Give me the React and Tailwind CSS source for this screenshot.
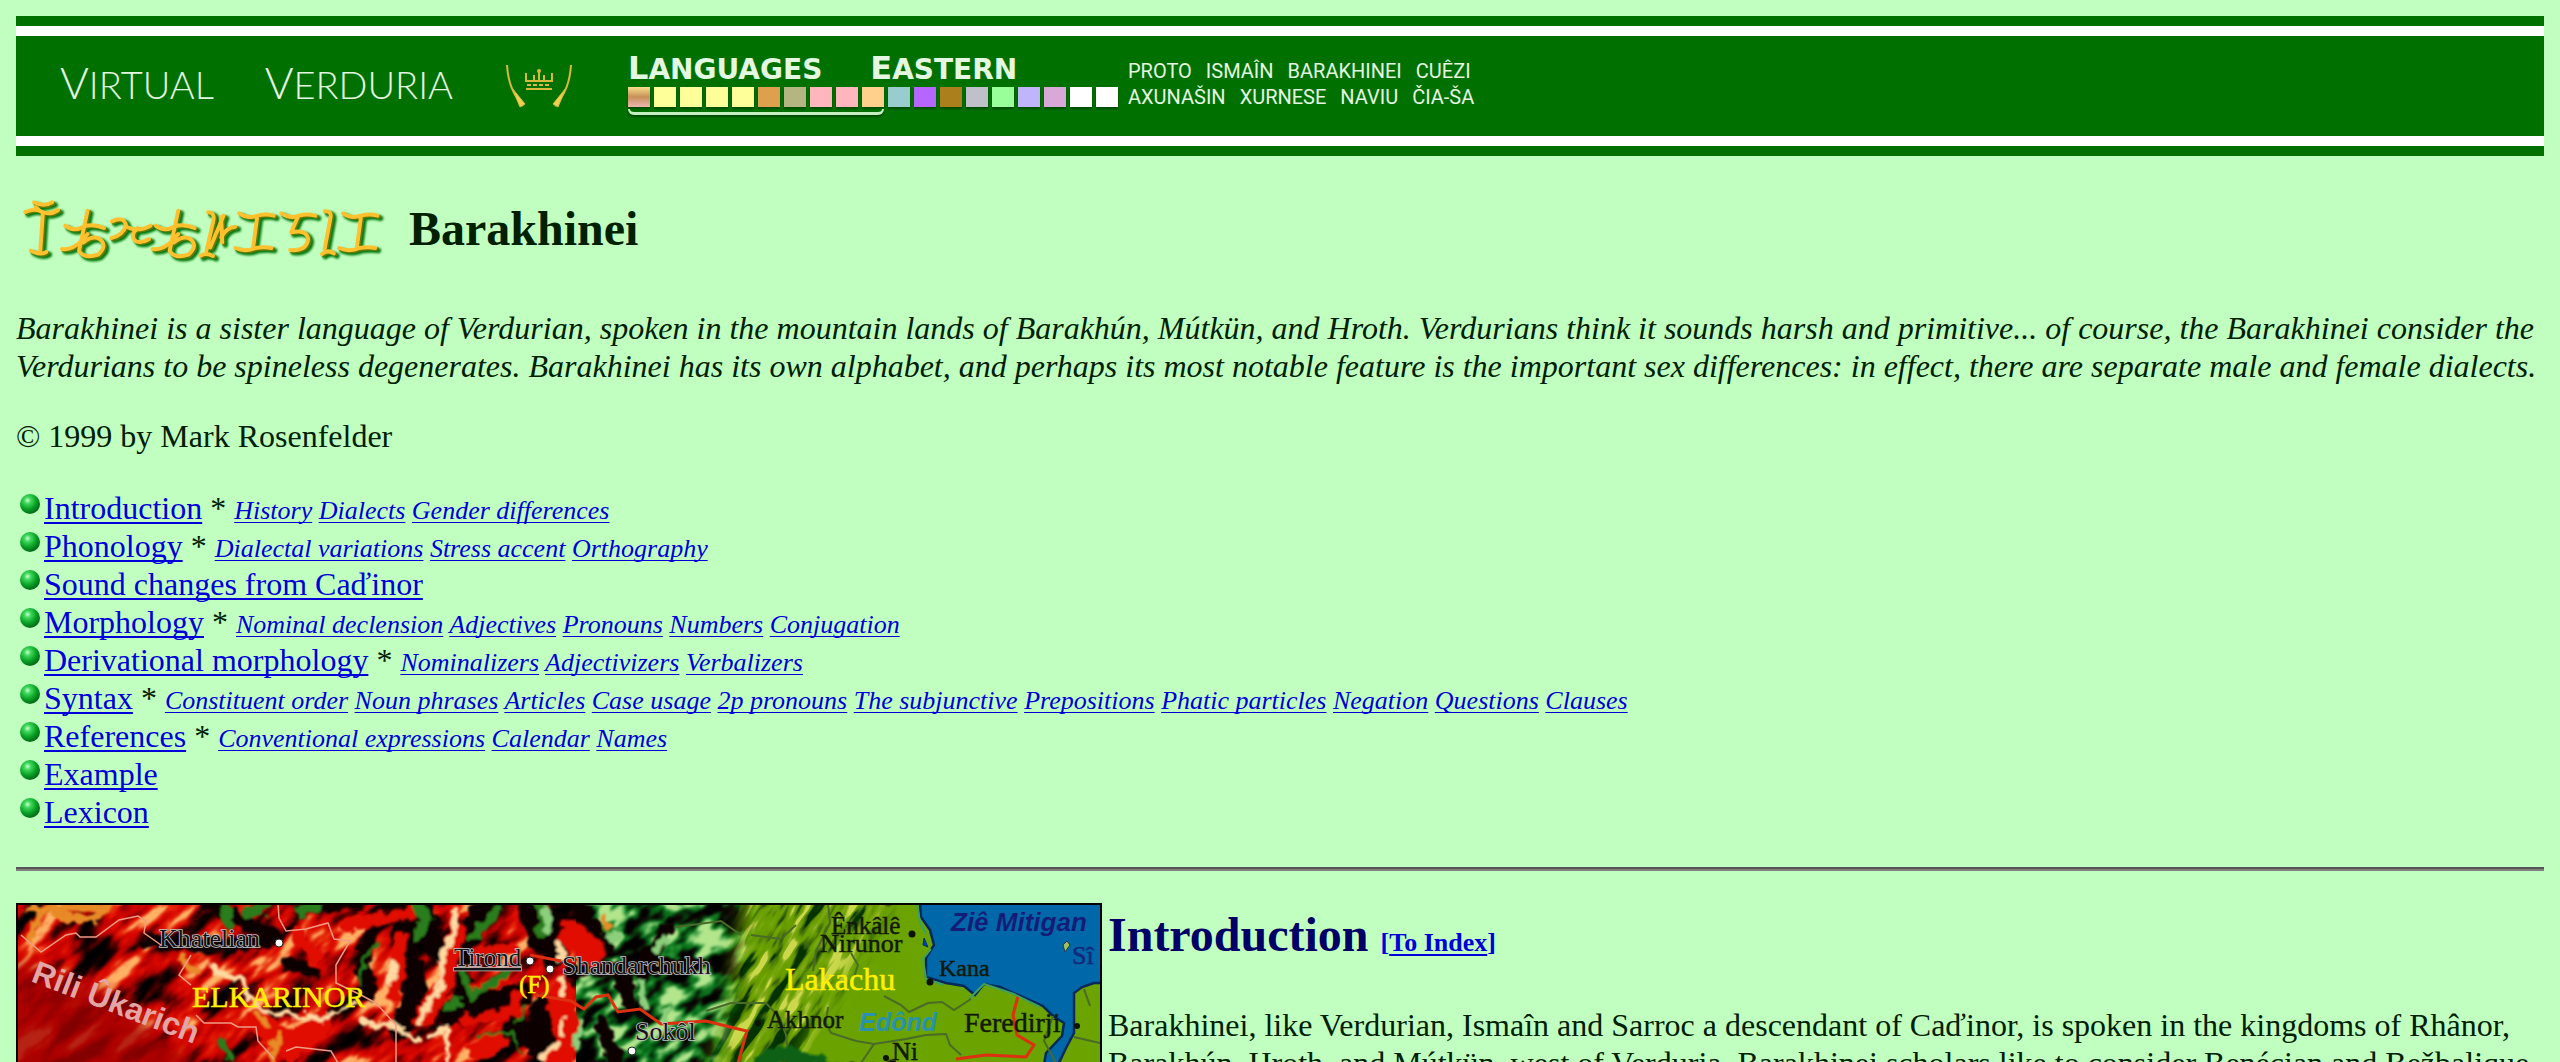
const TOPICS = [
  { title: 'Introduction', links: ['History', 'Dialects', 'Gender differences'] },
  { title: 'Phonology', links: ['Dialectal variations', 'Stress accent', 'Orthography'] },
  { title: 'Sound changes from Caďinor', links: [] },
  { title: 'Morphology', links: ['Nominal declension', 'Adjectives', 'Pronouns', 'Numbers', 'Conjugation'] },
  { title: 'Derivational morphology', links: ['Nominalizers', 'Adjectivizers', 'Verbalizers'] },
  {
    title: 'Syntax',
    links: [
      'Constituent order', 'Noun phrases', 'Articles', 'Case usage', '2p pronouns', 'The subjunctive',
      'Prepositions', 'Phatic particles', 'Negation', 'Questions', 'Clauses',
    ],
  },
  { title: 'References', links: ['Conventional expressions', 'Calendar', 'Names'] },
  { title: 'Example', links: [] },
  { title: 'Lexicon', links: [] },
];

const SWATCHES = [
  'bg-linear-to-b from-[#f6e08a] via-[#c89058] to-[#f0b8b0]',
  'bg-[#ffff99]', 'bg-[#ffff99]', 'bg-[#ffff99]', 'bg-[#ffff99]',
  'bg-[#dda04c]', 'bg-[#b5b582]', 'bg-[#ffb6bd]', 'bg-[#ffb6bd]', 'bg-[#ffd08c]',
  'bg-[#99cccc]', 'bg-[#b566ff]', 'bg-[#aa7f1c]', 'bg-[#c0c0c8]', 'bg-[#99ff99]',
  'bg-[#c0b5fa]', 'bg-[#d8a8d8]', 'bg-white', 'bg-white',
];

const LANGUAGE_ROWS = [
  ['PROTO', 'ISMAÎN', 'BARAKHINEI', 'CUÊZI'],
  ['AXUNAŠIN', 'XURNESE', 'NAVIU', 'ČIA-ŠA'],
];

function Crest() {
  return (
    <svg className="h-11 w-[68px] shrink-0" viewBox="0 0 68 44" fill="none" stroke="#d9b93c" aria-hidden="true">
      <path d="M2 1C3 17 7 29 18 42" strokeWidth="2" />
      <path d="M7 24L20 40L15 43Z" fill="#f0d050" strokeWidth="1" />
      <path d="M66 1C65 17 61 29 50 42" strokeWidth="2" />
      <path d="M61 24L48 40L53 43Z" fill="#f0d050" strokeWidth="1" />
      <path d="M21 9V17H47V9M29 11V17M39 11V17M34 8V17" strokeWidth="2" />
      <circle cx="34" cy="7" r="2" fill="#d9b93c" stroke="none" />
      <path d="M22 21H46" strokeWidth="2" strokeDasharray="4 2" />
      <path d="M21 25H47" strokeWidth="2" />
    </svg>
  );
}

function ScriptStrokes() {
  return (
    <>
      <path d="M55 45Q85 60 110 45M28 74Q60 60 80 74Q105 84 128 68M82 74L74 190M45 190Q75 205 92 194M60 60L68 66" />
      <path d="M218 70L192 190Q205 215 250 202Q280 175 255 155Q235 142 205 165M150 115Q175 135 205 118Q235 108 268 122M140 185Q170 190 200 160L218 140" />
      <path d="M292 102Q330 85 335 115Q325 145 290 152M340 120Q370 135 410 115M370 122Q345 145 365 162Q385 168 405 155" />
      <path d="M494 70L468 190Q480 215 525 202Q556 175 531 155Q511 142 481 165M426 115Q451 135 481 118Q511 108 544 122M416 185Q446 190 476 160L494 140" />
      <path d="M585 75Q608 75 600 105L580 190M562 205Q580 195 600 206M632 85L592 180M625 90L628 165M625 150Q640 120 668 118" />
      <path d="M680 78Q705 95 735 85Q760 78 785 85M735 85L722 182M668 182Q700 195 730 182Q755 178 778 182" />
      <path d="M808 78Q835 95 862 85Q885 78 912 85M860 85L838 135Q885 125 890 155Q885 192 835 188" />
      <path d="M940 72Q962 70 958 90L940 185M932 200Q950 185 968 198" />
      <path d="M996 78Q1021 95 1051 85Q1076 78 1101 85M1051 85L1038 182M984 182Q1016 195 1046 182Q1071 178 1094 182" />
    </>
  );
}

function NativeName() {
  return (
    <svg className="h-[85px] w-[381px] shrink-0" viewBox="0 0 1143 255" role="img" aria-label="Barakhinei in its own alphabet">
      <defs>
        <filter id="soft" x="-5%" y="-20%" width="110%" height="140%">
          <feGaussianBlur stdDeviation="3" />
        </filter>
      </defs>
      <g fill="none" strokeLinecap="round" strokeLinejoin="round" transform="translate(0 -2) scale(.985 1)">
        <g transform="translate(10 8)" stroke="#00780c" strokeWidth="16" filter="url(#soft)"><ScriptStrokes /></g>
        <g transform="translate(5 4)" stroke="#5d7a08" strokeWidth="12"><ScriptStrokes /></g>
        <g stroke="#ffc12e" strokeWidth="12"><ScriptStrokes /></g>
      </g>
    </svg>
  );
}

function Bullet() {
  return (
    <svg className="mt-[5px] mr-1 ml-1 h-5 w-5 shrink-0" viewBox="0 0 20 20" aria-hidden="true">
      <defs>
        <radialGradient id="bead" cx="38%" cy="32%" r="68%">
          <stop offset="0" stopColor="#c8ffd0" />
          <stop offset=".25" stopColor="#3fd85a" />
          <stop offset=".65" stopColor="#08a024" />
          <stop offset="1" stopColor="#056a18" />
        </radialGradient>
      </defs>
      <circle cx="10" cy="10" r="10" fill="url(#bead)" />
    </svg>
  );
}

const SERIF = '"Liberation Serif", serif';
const SANS = '"Liberation Sans", sans-serif';

function RegionMap() {
  return (
    <svg className="block h-[158px] w-full" viewBox="2 2 1082 158" preserveAspectRatio="xMinYMin slice" role="img" aria-label="Map of the Barakhinei kingdoms">
      <defs>
        <filter id="redRelief" x="0" y="0" width="100%" height="100%" colorInterpolationFilters="sRGB">
          <feTurbulence type="fractalNoise" baseFrequency=".016 .05" numOctaves="4" seed="7" />
          <feColorMatrix values="2.6 0 0 0 -.75  2.6 0 0 0 -.75  2.6 0 0 0 -.75  0 0 0 0 1" />
          <feComponentTransfer>
            <feFuncR type="table" tableValues="0 .1 .42 .75 .86 .9 1" />
            <feFuncG type="table" tableValues="0 0 0 .01 .03 .16 .7" />
            <feFuncB type="table" tableValues="0 0 0 0 0 .04 .4" />
          </feComponentTransfer>
          <feGaussianBlur stdDeviation=".8" />
        </filter>
        <filter id="greenRelief" x="0" y="0" width="100%" height="100%" colorInterpolationFilters="sRGB">
          <feTurbulence type="fractalNoise" baseFrequency=".03 .06" numOctaves="3" seed="12" />
          <feColorMatrix values="3.4 0 0 0 -1.15  3.4 0 0 0 -1.15  3.4 0 0 0 -1.15  0 0 0 0 1" />
          <feComponentTransfer>
            <feFuncR type="table" tableValues="0 .06 .02 .03 .1 .4 .7" />
            <feFuncG type="table" tableValues="0 .02 .22 .42 .52 .72 .9" />
            <feFuncB type="table" tableValues="0 .02 .05 .1 .15 .38 .55" />
          </feComponentTransfer>
          <feGaussianBlur stdDeviation=".8" />
        </filter>
        <filter id="foothills" x="0" y="0" width="100%" height="100%" colorInterpolationFilters="sRGB">
          <feTurbulence type="fractalNoise" baseFrequency=".02 .09" numOctaves="3" seed="4" />
          <feColorMatrix values="3 0 0 0 -1  3 0 0 0 -1  3 0 0 0 -1  0 0 0 0 1" />
          <feComponentTransfer>
            <feFuncR type="table" tableValues=".02 .25 .4 .42 .5 .8" />
            <feFuncG type="table" tableValues=".2 .42 .6 .64 .66 .85" />
            <feFuncB type="table" tableValues="0 .05 0 0 .1 .3" />
          </feComponentTransfer>
        </filter>
        <filter id="rough" x="-10%" y="-10%" width="120%" height="120%">
          <feTurbulence type="fractalNoise" baseFrequency=".09" numOctaves="2" seed="3" result="n" />
          <feDisplacementMap in="SourceGraphic" in2="n" scale="14" xChannelSelector="R" yChannelSelector="G" />
          <feGaussianBlur stdDeviation=".8" />
        </filter>
        <filter id="feather" x="-10%" y="-10%" width="120%" height="120%">
          <feGaussianBlur stdDeviation="9" />
        </filter>
        <mask id="hillsMask">
          <path d="M730 -20L880 -20L840 60L800 120L770 180L690 180L715 100Z" fill="#fff" filter="url(#feather)" />
        </mask>
        <clipPath id="west"><rect x="0" y="0" width="575" height="160" /></clipPath>
        <clipPath id="middle"><rect x="560" y="0" width="260" height="160" /></clipPath>
      </defs>

      <rect width="1084" height="160" fill="#0a0000" />
      <g clipPath="url(#west)">
        <rect x="-200" y="-500" width="1000" height="1000" transform="rotate(-42 280 80)" filter="url(#redRelief)" />
      </g>
      <g clipPath="url(#middle)">
        <rect x="350" y="-200" width="700" height="600" transform="rotate(-35 690 80)" filter="url(#greenRelief)" />
      </g>
      <path d="M-20 60Q60 60 130 120Q165 145 200 180H-20Z" fill="#a40000" opacity=".8" filter="url(#feather)" />
      <path d="M770 0H1084V160H760L735 120Q750 80 770 0Z" fill="#6ba300" filter="url(#rough)" />
      <rect x="880" width="204" height="160" fill="#6ba300" />
      <g mask="url(#hillsMask)">
        <rect x="550" y="-250" width="500" height="600" transform="rotate(-58 790 80)" filter="url(#foothills)" />
      </g>

      <g fill="none" strokeLinecap="round" filter="url(#rough)">
        <g stroke="#0c0000">
          <path d="M398 -5L385 30L400 90L385 125" strokeWidth="24" />
          <path d="M405 0L420 45M470 0L440 60L448 88M515 0L525 40M540 20L538 55" strokeWidth="22" />
          <path d="M356 30Q340 60 354 92" strokeWidth="15" />
          <path d="M435 110L505 92M528 105L525 145M500 125L535 145" strokeWidth="26" />
          <path d="M300 70L270 60M190 0L232 20L262 35M285 5L340 0M130 38L190 42L250 40" strokeWidth="13" />
          <path d="M590 45L560 0M605 70L612 100M585 120L600 160M650 25L625 70M555 68L680 62" strokeWidth="15" />
        </g>
        <g stroke="#e00d00">
          <path d="M330 22L392 12M280 30L300 55" strokeWidth="13" />
          <path d="M384 38L378 92" strokeWidth="15" />
          <path d="M440 25L430 80L405 118" strokeWidth="16" />
          <path d="M460 48L497 44M458 88L488 76M450 118L497 110L502 90" strokeWidth="9" />
          <path d="M555 30L575 50M545 90L550 135" strokeWidth="26" />
          <path d="M240 118L275 145L305 120" strokeWidth="24" />
          <path d="M460 148L480 140M535 155L550 150" strokeWidth="20" />
        </g>
        <g stroke="#ffd9a0">
          <path d="M439 8L438 28L425 60L424 85L408 108L404 122" strokeWidth="6" />
          <path d="M412 135L430 125L432 155M378 60L374 82M345 118L385 125L402 140" strokeWidth="5" />
          <path d="M196 62L200 70L225 75L232 95L250 108L305 116L340 100" strokeWidth="5" />
          <path d="M544 42V56M546 76V92M546 120V132M525 155L540 143" strokeWidth="6" />
        </g>
        <g stroke="#e88a28">
          <path d="M12 5L95 3L75 18L40 10M25 10L14 35" strokeWidth="8" />
          <path d="M180 70L165 55M240 112L250 120M588 14L592 24M255 160L262 130" strokeWidth="7" />
        </g>
        <g stroke="#2c7d1e">
          <path d="M208 5L215 25M232 10L250 4M285 8L300 4" strokeWidth="11" />
          <path d="M365 38Q340 60 345 85" strokeWidth="3" />
          <path d="M400 5L410 14L402 32M455 35L480 10M522 0L530 14L525 30" strokeWidth="11" />
          <path d="M448 70L455 95L490 70M430 104L440 100M205 140L215 155" strokeWidth="8" />
          <path d="M462 132L495 130L505 150M510 105L498 120" strokeWidth="3" />
        </g>
        <g stroke="#8ccf7c">
          <path d="M527 5L534 16L530 28M592 36L605 32M640 45L650 36M650 105V118M564 120L560 145M626 80L628 104" strokeWidth="7" />
        </g>
      </g>

      <g fill="none" stroke="#ef9a84" strokeWidth="1.5">
        <path d="M5 32L25 49L50 32L60 30L64 34L80 34L103 17L122 13L130 18L128 30L145 42" />
        <path d="M262 0L263 15L270 28L290 26L312 20L318 36L334 38L320 62L320 80L345 92L360 100L380 122L380 160" />
        <path d="M180 112L188 120L215 120L222 124L240 124L242 138L258 156M270 148L280 144L315 148L322 160M175 52L163 72L175 82" />
      </g>
      <path d="M514 52L545 58M520 92L555 98L568 106L580 94L592 92L602 109L624 106L645 121L690 118L714 124L731 128L722 160M1002 93L997 112L1001 132L1018 142L1010 154L970 152L940 156" fill="none" stroke="#dd3010" strokeWidth="3" />

      <path d="M904 0L905 14L914 27L918 42L910 55L910 74L930 80L948 83L959 92L968 81L984 84L1002 92L1027 103L1037 113L1048 120L1046 133L1030 150L1028 162L1042 162L1050 145L1058 130L1058 90L1066 84L1078 80L1086 80V0Z" fill="#0068a8" stroke="#06285a" strokeWidth="2.5" />
      <path d="M903 0L906 18L912 30M917 45L909 55L912 75L930 81M955 95L970 80L1000 90L1026 103" fill="none" stroke="#3fa060" strokeWidth="2" transform="translate(-2 1)" />
      <path d="M908 35L912 44L907 42Z" fill="#0040b0" stroke="#003070" />
      <path d="M1047 42L1051 38L1054 42L1049 49Z" fill="#a0c060" stroke="#2c3a40" />
      <g fill="none" stroke="#4a6a28" strokeWidth="2">
        <path d="M868 93L885 102L893 109L912 100L926 99L938 107L955 96" />
        <path d="M812 104L810 120L815 130L840 138L858 141L890 136L910 132L930 131L934 142L945 152" />
        <path d="M690 108L715 100L750 100L764 115L770 132L772 150M858 141L845 160M1058 134L1084 140M1068 86L1074 103M1037 113L1028 138L1040 160" />
        <path d="M812 0L814 20L800 48L797 68M835 50L842 62L838 74M735 32L765 36L780 22M660 24L705 18L725 32" />
      </g>
      <path d="M735 162L750 145L775 143L800 152L830 162Z" fill="#086018" filter="url(#rough)" />

      <g fontFamily={SERIF} fontSize="26">
        <g fill="#141414" stroke="#c4c4c4" strokeWidth="1.6" paintOrder="stroke">
          <text x="143" y="44">Khatelian</text>
          <text x="438" y="63" fontSize="25" textDecoration="underline">Tirond</text>
          <text x="546" y="71">Shandarchukh</text>
          <text x="619" y="137">Sokôl</text>
        </g>
        <g fill="#111a08" stroke="#111a08" strokeWidth=".5">
          <text x="815" y="31" fontSize="25">Ênkâlê</text>
          <text x="804" y="49">Nirunor</text>
          <text x="751" y="125" fontSize="25">Akhnor</text>
          <text x="923" y="73" fontSize="24">Kana</text>
          <text x="948" y="129" fontSize="28">Feredirji</text>
          <text x="876" y="157">Ni</text>
          <text x="1056" y="61" fill="#12287c" stroke="#12287c">Sî</text>
        </g>
        <g fill="#fff000" stroke="#fff000" strokeWidth=".5">
          <text x="176" y="104" fontSize="30">ELKARINOR</text>
          <text x="503" y="90" fontSize="25">(F)</text>
          <text x="769" y="87" fontSize="32">Lakachu</text>
        </g>
      </g>
      <g fontFamily={SANS}>
        <text x="14" y="78" fontSize="32" fontWeight="bold" fill="#e2a6a6" transform="rotate(21 14 78)">Rili Ûkarich</text>
        <g fontSize="26" fontWeight="bold" fontStyle="italic">
          <text x="935" y="28" fill="#151c78">Ziê Mitigan</text>
          <text x="843" y="128" fontSize="25" fill="#2893ae">Edônd</text>
        </g>
      </g>
      <g fill="#fff" stroke="#222">
        <circle cx="263" cy="40" r="4" /><circle cx="514" cy="58" r="4" />
        <circle cx="534" cy="66" r="4" /><circle cx="616" cy="148" r="4" />
      </g>
      <g fill="#0c1206">
        <circle cx="896" cy="31" r="3.5" /><circle cx="742" cy="120" r="3" /><circle cx="914" cy="79" r="3.5" />
        <circle cx="1061" cy="123" r="3" /><circle cx="870" cy="155" r="3" />
      </g>
    </svg>
  );
}

function Banner() {
  return (
    <header className="border-y-[10px] border-[#007100] bg-white py-[10px] font-['Lato',sans-serif] text-[#e4f7e0]">
      <div className="flex h-[100px] items-start bg-[#007100] pl-11">
        <a href="#verduria" className="mt-5 flex w-[401px] shrink-0 items-baseline justify-between pr-2 text-[38px] leading-[56px] font-light whitespace-nowrap">
          <span><span className="text-[44px] leading-none">V</span>IRTUAL</span>
          <span><span className="text-[44px] leading-none">V</span>ERDURIA</span>
        </a>
        <div className="mt-7 ml-11"><Crest /></div>
        <div className="mt-4 ml-[55px] flex shrink-0 flex-col">
          <div className="flex h-[35px] gap-12 font-['DejaVu_Sans',sans-serif] text-[28px] leading-[35px] font-bold whitespace-nowrap">
            <a href="#languages"><span className="text-[32px] leading-none">L</span>ANGUAGES</a>
            <a href="#eastern"><span className="text-[32px] leading-none">E</span>ASTERN</a>
          </div>
          <div className="flex gap-1">
            {SWATCHES.map((tone, i) => (
              <a key={i} href="#swatch" aria-label={`Language ${i + 1}`} className={`h-5 w-[22px] shadow-[0_2px_2px_#004a00] ${tone}`} />
            ))}
          </div>
          <div className="mt-0.5 h-1.5 w-64 rounded-b-lg border-b-[3px] border-x-2 border-[#c4efc0] shadow-[0_2px_2px_#004a00]" />
        </div>
        <nav className="mt-[22px] ml-2.5 flex flex-col font-['Roboto',sans-serif] text-[20px] leading-[26px]" aria-label="Languages">
          {LANGUAGE_ROWS.map((row) => (
            <div key={row[0]} className="flex gap-3.5">
              {row.map((name) => <a key={name} href="#language">{name}</a>)}
            </div>
          ))}
        </nav>
      </div>
    </header>
  );
}

const LINK = 'text-[#0000d8] underline decoration-2 underline-offset-[3px] [text-decoration-skip-ink:none]';
const SUBLINK = 'text-[#0000d8] underline decoration-1 underline-offset-[3px] [text-decoration-skip-ink:none]';

export default function App() {
  return (
    <div className="h-screen overflow-hidden bg-[#c0ffc0] p-4 font-['Liberation_Serif',serif] text-[32px] leading-[38px] text-[#002000]">
      <Banner />
      <div className="mt-8 flex items-center gap-3">
        <NativeName />
        <h1 className="mb-1 text-[48px] leading-[56px] font-bold">Barakhinei</h1>
      </div>
      <p className="mt-9 italic">
        Barakhinei is a sister language of Verdurian, spoken in the mountain lands of Barakhún, Mútkün, and Hroth.
        Verdurians think it sounds harsh and primitive... of course, the Barakhinei consider the Verdurians to be
        spineless degenerates. Barakhinei has its own alphabet, and perhaps its most notable feature is the important
        sex differences: in effect, there are separate male and female dialects.
      </p>
      <p className="mt-8">© 1999 by Mark Rosenfelder</p>
      <ul className="mt-[34px]">
        {TOPICS.map(({ title, links }) => (
          <li key={title} className="flex">
            <Bullet />
            <div>
              <a href="#topic" className={LINK}>{title}</a>
              {links.length > 0 && (
                <>
                  {' * '}
                  <span className="text-[26px] leading-none italic">
                    {links.map((name, i) => (
                      <span key={name}>
                        {i > 0 && ' '}
                        <a href="#section" className={SUBLINK}>{name}</a>
                      </span>
                    ))}
                  </span>
                </>
              )}
            </div>
          </li>
        ))}
      </ul>
      <hr className="mt-9 border-t-2 border-b-2 border-t-[#555] border-b-[#808080]" />
      <section className="mt-8 flex items-start gap-1.5">
        <div className="w-[1086px] shrink-0 border-2 border-b-0 border-black">
          <RegionMap />
        </div>
        <div className="grow">
          <h2 className="mt-1 text-[48px] leading-[56px] font-bold text-[#000066]">
            Introduction{' '}
            <small className="text-[26px] leading-none text-[#0000d8]">[<a href="#index" className={LINK}>To Index</a>]</small>
          </h2>
          <p className="mt-[43px]">
            Barakhinei, like Verdurian, Ismaîn and Sarroc a descendant of Caďinor, is spoken in the kingdoms of Rhânor,
            Barakhún, Hroth, and Mútkün, west of Verduria. Barakhinei scholars like to consider Benécian and Bežbalique
          </p>
        </div>
      </section>
    </div>
  );
}
